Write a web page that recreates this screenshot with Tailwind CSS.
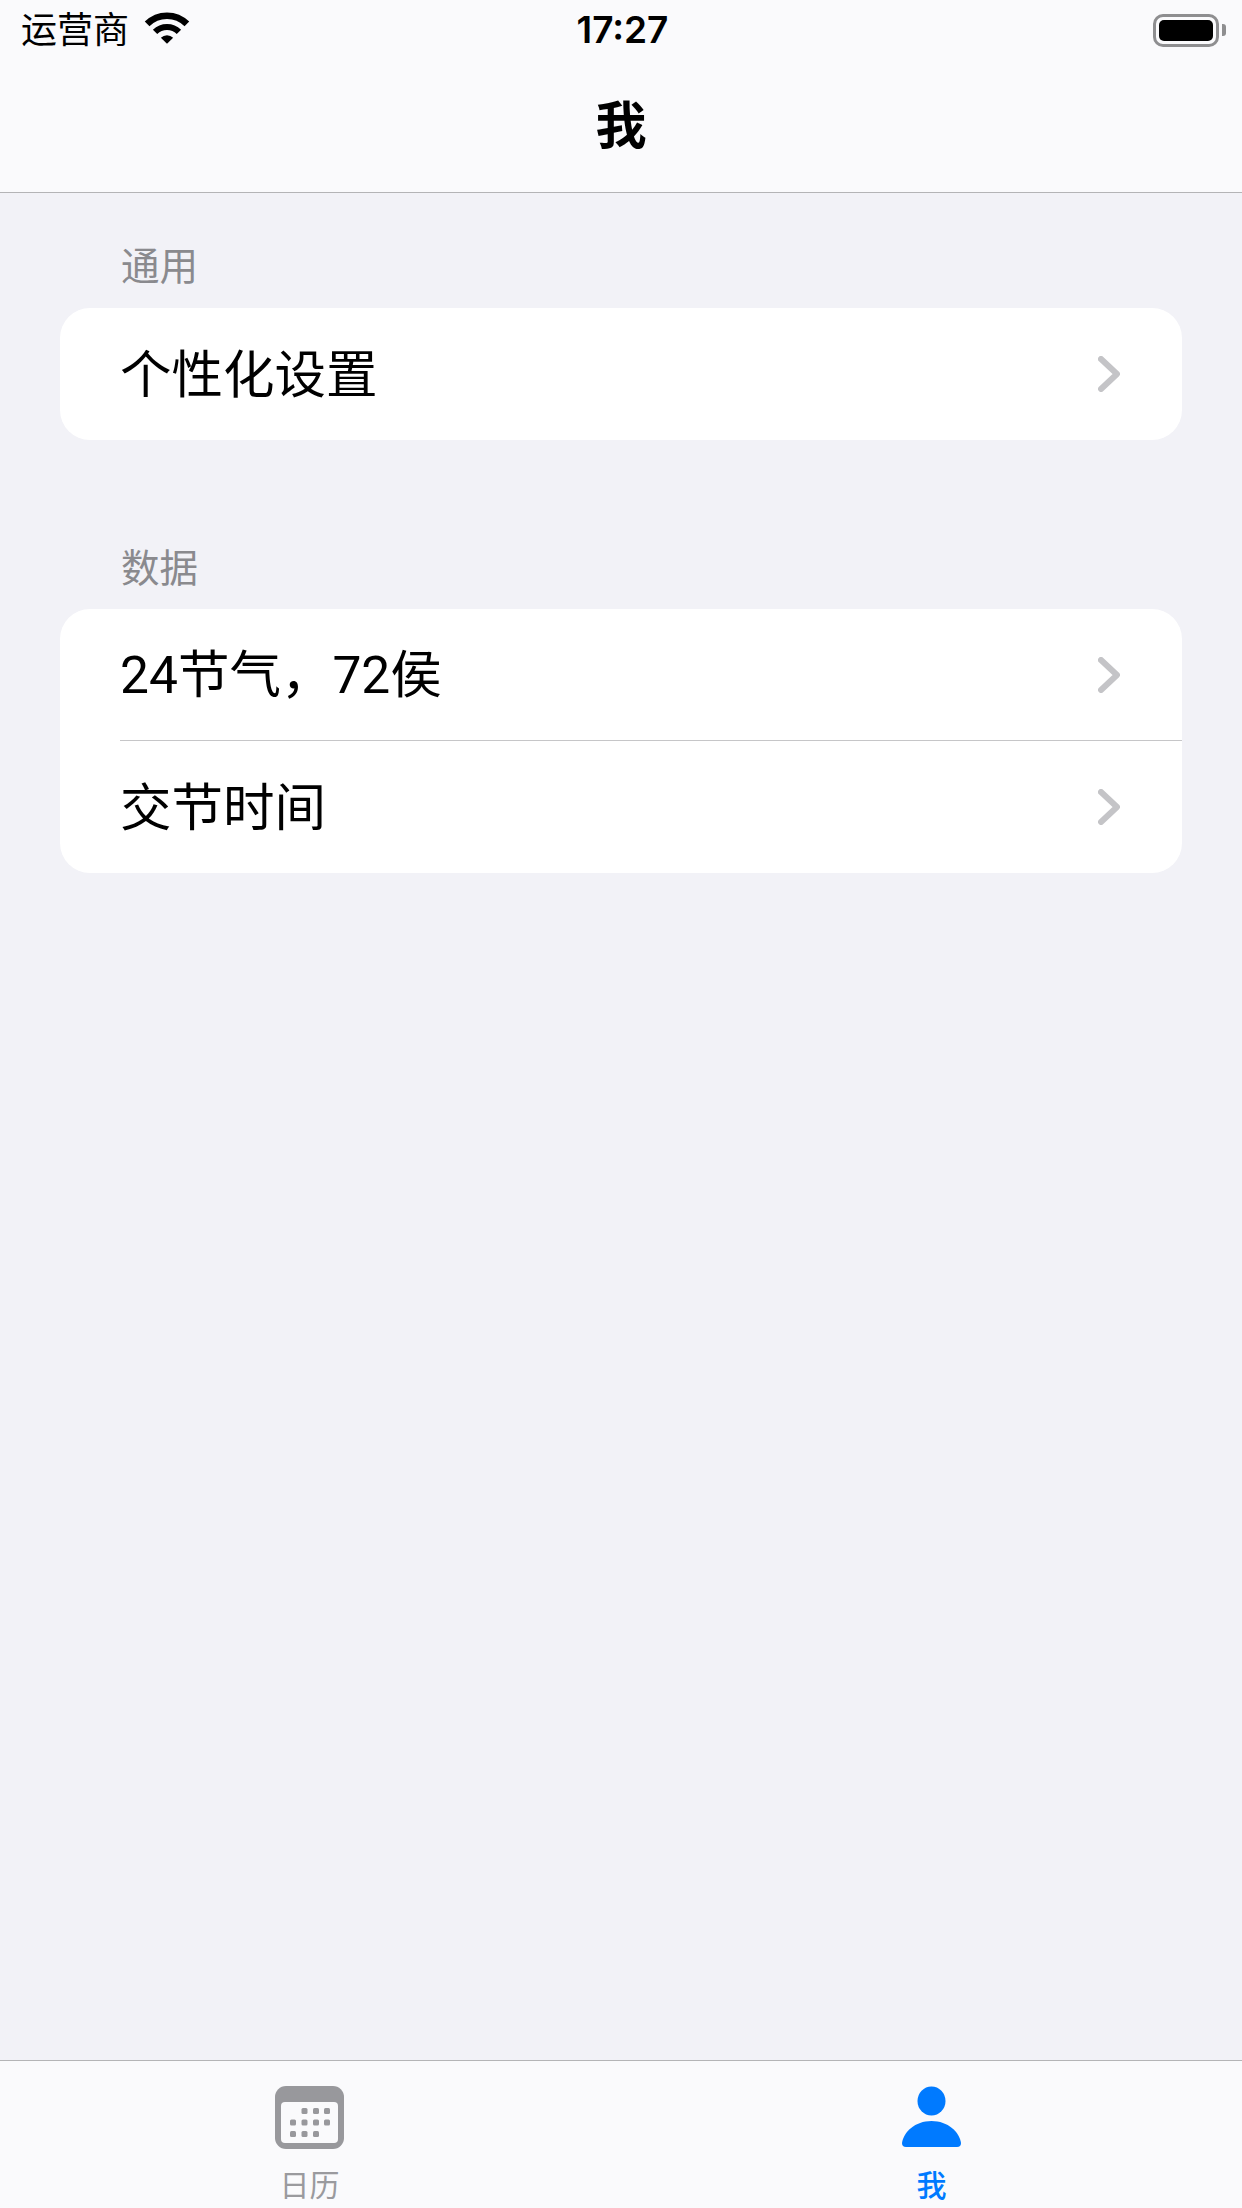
<!DOCTYPE html>
<html lang="zh-CN">
<head>
    <meta charset="UTF-8">
    <meta name="viewport" content="width=device-width, initial-scale=1.0">
    <title>我</title>
    <script src="https://cdn.jsdelivr.net/npm/@tailwindcss/browser@4"></script>
</head>
<body class="bg-[#f2f2f7] font-['Inter','Noto_Sans_CJK_SC',sans-serif] text-black antialiased">
<div class="flex flex-col w-[1242px] h-[2208px] overflow-hidden">

    <!-- nav bar -->
    <header class="h-[193px] shrink-0 bg-[#fafafc] border-b border-[#b4b4b6]">
        <div class="grid grid-cols-3 items-center h-[60px] pl-[21px] pr-[16px]">
            <div class="flex items-center gap-[15px]">
                <span class="text-[36px] leading-[60px]">运营商</span>
                <svg class="w-[46px] h-[33px] mb-[3px]" viewBox="0 0 45 32" fill="none">
                    <path d="M3.05 11.55A27.5 27.5 0 0 1 41.95 11.55" stroke="#000" stroke-width="6.5"/>
                    <path d="M10.83 19.33A16.5 16.5 0 0 1 34.17 19.33" stroke="#000" stroke-width="6"/>
                    <path d="M22.5 31L16.5 25A8.5 8.5 0 0 1 28.5 25Z" fill="#000"/>
                </svg>
            </div>
            <div class="text-center text-[37px] leading-[60px] font-semibold pr-[2px]">17:27</div>
            <div class="flex justify-end items-center">
                <div class="w-[66px] h-[33px] p-[3px] border-[3px] border-[#8e8e90] rounded-[10px]">
                    <div class="w-full h-full bg-black rounded-[5px]"></div>
                </div>
                <div class="w-[4px] h-[12px] ml-[3px] bg-[#8e8e90] rounded-r-[3px]"></div>
            </div>
        </div>
        <h1 class="text-center text-[51px] leading-[132px] h-[132px] font-semibold">我</h1>
    </header>

    <!-- settings list -->
    <main class="flex-1 px-[60px] pt-[50px]">
        <section>
            <h2 class="pl-[61px] text-[38.5px] leading-[46px] mb-[19px] text-[#8a8a8e]">通用</h2>
            <div class="bg-white rounded-[30px]">
                <div class="flex items-center justify-between h-[132px] pl-[60px] pr-[62px]">
                    <span class="text-[51.5px] pt-[2px]">个性化设置</span>
                    <svg class="w-[22px] h-[36px]" viewBox="0 0 22 36" fill="none"><path d="M3 3L19 18L3 33" stroke="#c4c4c7" stroke-width="6" stroke-linecap="round" stroke-linejoin="round"/></svg>
                </div>
            </div>
        </section>

        <section class="mt-[105px]">
            <h2 class="pl-[61px] text-[38.5px] leading-[46px] mb-[18px] text-[#8a8a8e]">数据</h2>
            <div class="bg-white rounded-[30px]">
                <div class="flex items-center justify-between h-[131px] pl-[60px] pr-[62px]">
                    <span class="font-['Roboto','Noto_Sans_CJK_SC',sans-serif] text-[51.5px] pt-[2px]">24节气，72侯</span>
                    <svg class="w-[22px] h-[36px]" viewBox="0 0 22 36" fill="none"><path d="M3 3L19 18L3 33" stroke="#c4c4c7" stroke-width="6" stroke-linecap="round" stroke-linejoin="round"/></svg>
                </div>
                <div class="ml-[60px] h-[1px] bg-[#c6c6c8]"></div>
                <div class="flex items-center justify-between h-[132px] pl-[60px] pr-[62px]">
                    <span class="text-[51.5px] pt-[2px]">交节时间</span>
                    <svg class="w-[22px] h-[36px]" viewBox="0 0 22 36" fill="none"><path d="M3 3L19 18L3 33" stroke="#c4c4c7" stroke-width="6" stroke-linecap="round" stroke-linejoin="round"/></svg>
                </div>
            </div>
        </section>
    </main>

    <!-- tab bar -->
    <nav class="grid grid-cols-2 h-[148px] shrink-0 pt-[25px] bg-[#fafafc] border-t border-[#b4b4b6]">
        <div class="flex flex-col items-center pr-[2px]">
            <svg class="w-[69px] h-[63px]" viewBox="0 0 69 63">
                <rect width="69" height="63" rx="11" fill="#98989c"/>
                <rect x="6" y="16" width="57" height="41" rx="4" fill="#fafafc"/>
                <g fill="#98989c">
                    <rect x="26.500" y="22" width="6" height="6" rx="1.500"/>
                    <rect x="38" y="22" width="6" height="6" rx="1.500"/>
                    <rect x="49" y="22" width="6" height="6" rx="1.500"/>
                    <rect x="15" y="33.500" width="6" height="6" rx="1.500"/>
                    <rect x="26.500" y="33.500" width="6" height="6" rx="1.500"/>
                    <rect x="38" y="33.500" width="6" height="6" rx="1.500"/>
                    <rect x="49" y="33.500" width="6" height="6" rx="1.500"/>
                    <rect x="15" y="45" width="6" height="6" rx="1.500"/>
                    <rect x="26.500" y="45" width="6" height="6" rx="1.500"/>
                    <rect x="38" y="45" width="6" height="6" rx="1.500"/>
                </g>
            </svg>
            <span class="mt-[20px] text-[30px] leading-[32px] text-[#9a9a9e]">日历</span>
        </div>
        <div class="flex flex-col items-center">
            <svg class="w-[59px] h-[63px]" viewBox="0 0 59 63" fill="#007aff">
                <ellipse cx="29.500" cy="15" rx="14" ry="14.500"/>
                <path d="M4 61H55A4 4 0 0 0 59 57C57.500 46 46 35 29.500 35C13 35 1.500 46 0 57A4 4 0 0 0 4 61Z"/>
            </svg>
            <span class="mt-[20px] text-[30px] leading-[32px] font-medium text-[#007aff]">我</span>
        </div>
    </nav>
</div>
</body>
</html>
